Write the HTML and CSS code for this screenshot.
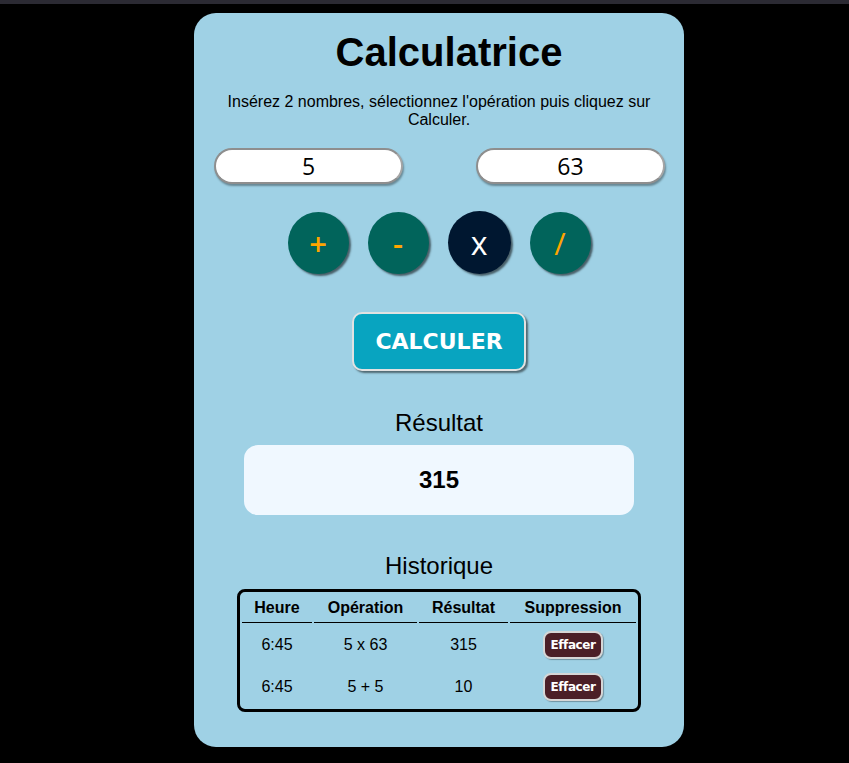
FILE: index.html
```html
<!DOCTYPE html>
<html lang="fr">
<head>
<meta charset="utf-8">
<title>Calculatrice</title>
<link rel="stylesheet" href="styles.css">
</head>
<body>
<div class="topbar"></div>
<main class="card">
  <h1 class="title">Calculatrice</h1>
  <p class="intro">Insérez 2 nombres, sélectionnez l'opération puis cliquez sur Calculer.</p>
  <div class="inputs">
    <input class="num" type="text" value="5">
    <input class="num" type="text" value="63">
  </div>
  <div class="ops">
    <button class="op">+</button>
    <button class="op">-</button>
    <button class="op op-active op-thin">x</button>
    <button class="op op-thin">/</button>
  </div>
  <div class="calc-row">
    <button class="calc">CALCULER</button>
  </div>
  <h2 class="label">Résultat</h2>
  <div class="result">315</div>
  <h2 class="label label-hist">Historique</h2>
  <div class="hist-wrap">
    <table class="hist">
      <colgroup>
        <col class="c1"><col class="c2"><col class="c3"><col class="c4">
      </colgroup>
      <thead>
        <tr><th>Heure</th><th>Opération</th><th>Résultat</th><th>Suppression</th></tr>
      </thead>
      <tbody>
        <tr><td>6:45</td><td>5 x 63</td><td>315</td><td><button class="del">Effacer</button></td></tr>
        <tr><td>6:45</td><td>5 + 5</td><td>10</td><td><button class="del">Effacer</button></td></tr>
      </tbody>
    </table>
  </div>
</main>
</body>
</html>
```
FILE: styles.css
```css
* { box-sizing: border-box; }
html, body { margin: 0; padding: 0; }
body {
  background: #000;
  font-family: "Liberation Sans", Arial, sans-serif;
  color: #000;
  height: 763px;
  overflow: hidden;
}
.topbar {
  height: 4px;
  background: #2b2a33;
}
.card {
  width: 490px;
  margin: 9px 0 0 194px;
  background: #9fd1e5;
  border-radius: 22px;
  padding: 16px 20px 35px 20px;
  display: flex;
  flex-direction: column;
}
.title {
  margin: 0;
  padding-left: 20px;
  font-size: 40px;
  line-height: 46px;
  font-weight: bold;
  text-align: center;
}
.intro {
  margin: 17.5px 0 0;
  font-size: 16px;
  line-height: 18px;
  text-align: center;
}
.inputs {
  margin-top: 19.5px;
  margin-right: -1px;
  display: flex;
  justify-content: space-between;
}
.num {
  width: 189px;
  height: 36px;
  border-radius: 18px;
  border: 2px solid #8e8e8e;
  border-right-color: #a5a5a5;
  box-shadow: 1px 2px 2px rgba(0,0,0,0.35);
  background: #fff;
  font-family: "Open Sans", sans-serif;
  font-size: 23px;
  text-align: center;
  color: #000;
  padding: 0;
  outline: none;
}
.ops {
  margin-top: 28px;
  display: flex;
  justify-content: center;
  gap: 19px;
}
.op {
  width: 61px;
  height: 62px;
  border-radius: 50%;
  border: none;
  background: #01645b;
  color: #ffa500;
  font-family: "Open Sans", sans-serif;
  font-size: 31px;
  font-weight: 600;
  line-height: 1;
  padding: 0;
  box-shadow: 2px 2px 2px rgba(0,0,0,0.55);
}
.op-thin {
  font-weight: normal;
}
.op-active {
  width: 63px;
  height: 63px;
  margin-top: -1px;
  background: #001730;
  color: #fff;
  font-size: 32px;
}
.calc-row {
  margin-top: 38px;
  display: flex;
  justify-content: center;
}
.calc {
  width: 174px;
  height: 59px;
  border-radius: 10px;
  border: 2px solid #e2e2e2;
  background: #08a4c0;
  color: #fff;
  font-family: "DejaVu Sans", Verdana, sans-serif;
  font-weight: bold;
  font-size: 22px;
  box-shadow: 2px 2px 2px rgba(0,0,0,0.5);
  padding: 0;
}
.label {
  margin: 37.75px 0 0;
  font-size: 24px;
  line-height: 28px;
  font-weight: normal;
  text-align: center;
}
.result {
  margin: 8.25px 30px 0;
  height: 70px;
  background: #f0f8ff;
  border-radius: 14px;
  display: flex;
  align-items: center;
  justify-content: center;
  font-weight: bold;
  font-size: 24px;
}
.label-hist {
  margin-top: 37.25px;
}
.hist-wrap {
  margin-top: 8.75px;
  display: flex;
  justify-content: center;
}
.hist {
  border: 3px solid #000;
  border-radius: 8px;
  border-spacing: 2px;
  table-layout: fixed;
  width: 404px;
}
.c1 { width: 70px; }
.c2 { width: 103px; }
.c3 { width: 89px; }
.c4 { width: 126px; }
.hist th {
  font-size: 16px;
  font-weight: bold;
  height: 29px;
  padding: 0;
  border-bottom: 1px solid #000;
  text-align: center;
}
.hist td {
  font-size: 16px;
  height: 40px;
  padding: 0;
  text-align: center;
}
.del {
  width: 60px;
  height: 28px;
  border-radius: 8px;
  border: 2px solid #d6d6d6;
  background: #4b1f27;
  color: #fff;
  font-family: "DejaVu Sans", Verdana, sans-serif;
  font-weight: bold;
  font-size: 12px;
  letter-spacing: -0.4px;
  padding: 0;
  box-shadow: 1px 1px 1px rgba(0,0,0,0.3);
}
```
